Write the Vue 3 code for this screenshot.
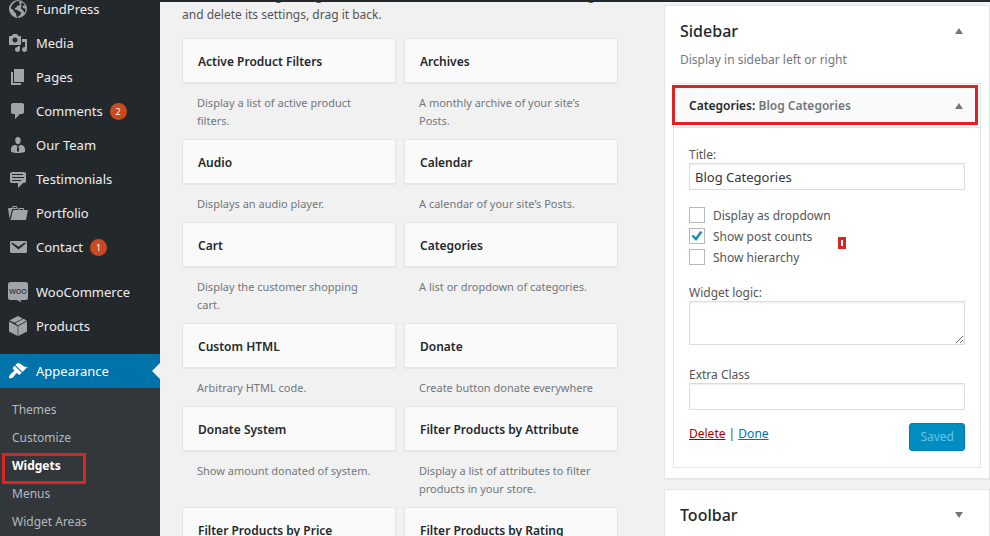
<script setup>
import { ref } from 'vue'

const icons = {
  globe: 'M10 1a9 9 0 1 0 0 18 9 9 0 0 0 0-18zM8.200 2.300l3.600-.2-.8 1.700 1.300 1.400-1.500 1.600-1.200-.3-1.300 1.900-1.500.7.300 1.500 2 .4 2.600 1.400 1.500 1.200-.8 2.300-2 1.400-.9 1.700-1.300-2.700-.2-2.100-1.700-1.300-.9-1.900-2.600-1.400.2-1.600 1.500-2.800zM14 3.300l2 1.600 1.200 2-1.600-.4-1.200 1.300.9 1.500 2.400.5-.3 2.300-1.200 1.800-.9-2.300-1.900-1.300-.6-2 .9-1.900-.7-1.400z',
  media: 'M13 11V4c0-.55-.45-1-1-1h-1.67L9 1H5L3.67 3H2c-.55 0-1 .45-1 1v7c0 .55.45 1 1 1h10c.55 0 1-.45 1-1zM7 4.5c1.38 0 2.5 1.12 2.5 2.5S8.38 9.5 7 9.5 4.5 8.38 4.5 7 5.62 4.5 7 4.5zM14 6h5v10.5c0 1.38-1.12 2.5-2.5 2.5S14 17.88 14 16.5s1.12-2.5 2.5-2.5c.17 0 .34.02.5.05V9h-3V6zm-4 8.05V13h2v3.5c0 1.38-1.12 2.5-2.5 2.5S7 17.88 7 16.5 8.12 14 9.5 14c.17 0 .34.02.5.05z',
  pages: 'M6 15V2h10v13H6zm-1 1h8v2H3V5h2v11z',
  comments: 'M5 2h9c1.1 0 2 .9 2 2v7c0 1.1-.9 2-2 2h-2l-5 5v-5H5c-1.1 0-2-.9-2-2V4c0-1.1.9-2 2-2z',
  team: 'M7.3 6l-.03-.19c-.04-.37-.05-.73-.03-1.08.02-.36.1-.71.25-1.04.14-.32.31-.61.52-.86s.49-.46.83-.6c.34-.15.72-.23 1.13-.23.69 0 1.26.2 1.71.59s.76.87.91 1.44.18 1.16.09 1.78l-.03.19c-.01.09-.05.25-.11.48-.05.24-.12.47-.2.69-.08.21-.19.45-.34.72-.14.27-.3.49-.47.69-.18.19-.4.34-.67.48-.27.13-.55.19-.86.19s-.59-.06-.87-.19c-.26-.13-.49-.29-.67-.5-.18-.2-.34-.42-.49-.66-.15-.25-.26-.49-.34-.73-.09-.25-.16-.47-.21-.67-.06-.21-.1-.37-.12-.5zm9.2 6.24c.41.7.5 1.41.5 2.14v2.49c0 .03-.12.08-.29.13-.18.04-.42.13-.97.27-.55.12-1.1.24-1.65.34s-1.19.19-1.95.27c-.75.08-1.46.12-2.13.12-.68 0-1.39-.04-2.14-.12-.75-.07-1.4-.17-1.98-.27-.58-.11-1.08-.23-1.56-.34-.49-.11-.8-.21-1.06-.29L3 16.87v-2.49c0-.75.07-1.46.46-2.15s.81-1.25 1.5-1.68C5.66 10.12 7.19 10 8 10l1.67 1.67L9 13v3l1.02 1.08L11 16v-3l-.68-1.33L11.97 10c.77 0 2.2.07 2.9.52.71.45 1.21 1.02 1.63 1.72z',
  testimonials: 'M4 3h12c.55 0 1.02.2 1.41.59S18 4.45 18 5v7c0 .55-.2 1.02-.59 1.41S16.55 14 16 14h-1l-5 5v-5H4c-.55 0-1.02-.2-1.41-.59S2 12.55 2 12V5c0-.55.2-1.02.59-1.41S3.45 3 4 3zm11 2H4v1h11V5zm1 3H4v1h12V8zm-3 3H4v1h9v-1z',
  portfolio: 'M4 5H.78c-.37 0-.74.32-.69.84l1.56 9.99S3.5 8.47 3.86 6.7c.11-.53.61-.7.98-.7H10s-.7-2.08-.77-2.31C9.11 3.25 8.89 3 8.45 3H5.14c-.36 0-.7.23-.8.64C4.25 4.04 4 5 4 5zm4.88 0h-4s.42-1 .87-1h2.13c.48 0 1 1 1 1zM2.67 16.25c-.31.47-.76.75-1.26.75h15.73c.54 0 .92-.31 1.03-.83.44-2.19 1.68-8.44 1.68-8.44.07-.5-.3-.73-.62-.73H16V5.53c0-.16-.26-.53-.66-.53h-3.76c-.52 0-.87.58-.87.58L10 7H5.59c-.32 0-.63.19-.69.5 0 0-1.59 6.7-1.72 7.33-.07.37-.22.99-.51 1.42zM15.38 7H11s.58-1 1.13-1h2.29c.71 0 .96 1 .96 1z',
  contact: 'M3.87 4h13.25C18.37 4 19 4.59 19 5.79v8.42c0 1.19-.63 1.79-1.88 1.79H3.87c-1.25 0-1.88-.6-1.88-1.79V5.79c0-1.2.63-1.79 1.88-1.79zm6.62 8.6l6.74-5.53c.24-.2.43-.66.13-1.07-.29-.41-.82-.42-1.17-.17l-5.7 3.86L4.8 5.83c-.35-.25-.88-.24-1.17.17-.3.41-.11.87.13 1.07z',
  woo: 'M2.5 0h15A2.5 2.5 0 0 1 20 2.5v13a2.5 2.5 0 0 1-2.5 2.5H12.6l.6 2.2L8.8 18H2.5A2.5 2.5 0 0 1 0 15.5v-13A2.5 2.5 0 0 1 2.5 0z',
  products: 'M10 0l4.8 2.400-8.400 4.400L1.400 4.600zM15.600 2.800L18.700 4.500 10 9.500 7.200 7.200zM1 5.400l8.700 4.800V20L1 15.400zM19 5.300v10.100L10.300 20v-9.800z',
  appearance: 'M14.48 11.06L7.41 3.99l1.5-1.5c.5-.56 2.3-.47 3.51.32 1.21.8 1.43 1.28 2.91 2.1 1.18.64 2.45 1.26 4.45.85zm-.71.71L6.7 4.7 4.93 6.47c-.39.39-.39 1.02 0 1.41l1.06 1.06c.39.39.39 1.03 0 1.42-.6.6-1.43 1.11-2.21 1.69-.35.26-.7.53-1.01.84C1.43 14.23.4 16.08 1.4 17.07c.99 1 2.84-.03 4.18-1.36.31-.31.58-.66.85-1.02.57-.78 1.08-1.61 1.69-2.21.39-.39 1.02-.39 1.41 0l1.06 1.06c.39.39 1.02.39 1.41 0z',
}

const menu = [
  { label: 'FundPress', icon: 'globe' },
  { label: 'Media', icon: 'media' },
  { label: 'Pages', icon: 'pages' },
  { label: 'Comments', icon: 'comments', count: 2 },
  { label: 'Our Team', icon: 'team' },
  { label: 'Testimonials', icon: 'testimonials' },
  { label: 'Portfolio', icon: 'portfolio' },
  { label: 'Contact', icon: 'contact', count: 1 },
  { label: 'WooCommerce', icon: 'woo', gap: true },
  { label: 'Products', icon: 'products' },
  { label: 'Appearance', icon: 'appearance', gap: true, current: true },
]
const submenu = ['Themes', 'Customize', 'Widgets', 'Menus', 'Widget Areas']

const widgets = [
  ['Active Product Filters', 'Display a list of active product filters.'],
  ['Archives', 'A monthly archive of your site’s Posts.'],
  ['Audio', 'Displays an audio player.'],
  ['Calendar', 'A calendar of your site’s Posts.'],
  ['Cart', 'Display the customer shopping cart.'],
  ['Categories', 'A list or dropdown of categories.'],
  ['Custom HTML', 'Arbitrary HTML code.'],
  ['Donate', 'Create button donate everywhere'],
  ['Donate System', 'Show amount donated of system.'],
  ['Filter Products by Attribute', 'Display a list of attributes to filter products in your store.'],
  ['Filter Products by Price', ''],
  ['Filter Products by Rating', ''],
]

const title = ref('Blog Categories')
const logic = ref('')
const extraClass = ref('')
const options = ref([
  { id: 'dropdown', label: 'Display as dropdown', on: false },
  { id: 'counts', label: 'Show post counts', on: true },
  { id: 'hierarchy', label: 'Show hierarchy', on: false },
])
</script>

<template>
  <div class="admin">
    <header class="adminbar"></header>
    <div class="body">
      <nav class="side">
        <a
          v-for="item in menu"
          :key="item.label"
          href="#"
          class="item"
          :class="{ gap: item.gap, current: item.current }"
        >
          <svg class="icon" viewBox="0 0 20 20" aria-hidden="true">
            <path :d="icons[item.icon]" fill-rule="evenodd" />
            <text v-if="item.icon === 'woo'" class="woo" x="10" y="12" text-anchor="middle">WOO</text>
          </svg>
          <span>{{ item.label }}</span>
          <span v-if="item.count" class="count">{{ item.count }}</span>
        </a>
        <div class="submenu">
          <a
            v-for="name in submenu"
            :key="name"
            href="#"
            class="subitem"
            :class="{ active: name === 'Widgets' }"
          >{{ name }}</a>
        </div>
      </nav>

      <main class="content">
        <section class="available">
          <p class="intro">To activate a widget drag it to a sidebar or click on it. To deactivate a widget and delete its settings, drag it back.</p>
          <div class="grid">
            <article v-for="[name, text] in widgets" :key="name">
              <h3 class="card">{{ name }}</h3>
              <p v-if="text" class="desc">{{ text }}</p>
            </article>
          </div>
        </section>

        <section class="areas">
          <div class="panel">
            <div class="panel-head">
              <h2>Sidebar</h2>
              <button type="button" class="toggle" aria-label="Collapse Sidebar"><i class="up"></i></button>
            </div>
            <p class="panel-desc">Display in sidebar left or right</p>
            <div class="widget">
              <div class="widget-head">
                <h3>Categories: <span>Blog Categories</span></h3>
                <button type="button" class="toggle" aria-label="Collapse Categories"><i class="up"></i></button>
              </div>
              <form class="form" @submit.prevent>
                <label class="label" for="w-title">Title:</label>
                <input id="w-title" v-model="title" class="text" type="text" />
                <div class="checks">
                  <label v-for="opt in options" :key="opt.id" class="check" :for="opt.id">
                    <input :id="opt.id" v-model="opt.on" type="checkbox" />
                    <span>{{ opt.label }}</span>
                  </label>
                  <span class="marker"></span>
                </div>
                <label class="label" for="w-logic">Widget logic:</label>
                <textarea id="w-logic" v-model="logic" class="text area"></textarea>
                <label class="label" for="w-class">Extra Class</label>
                <input id="w-class" v-model="extraClass" class="text" type="text" />
                <div class="actions">
                  <div class="links"><a href="#" class="delete">Delete</a> | <a href="#" class="done">Done</a></div>
                  <button type="submit" class="saved" disabled>Saved</button>
                </div>
              </form>
            </div>
          </div>
          <div class="panel">
            <div class="panel-head">
              <h2>Toolbar</h2>
              <button type="button" class="toggle" aria-label="Expand Toolbar"><i class="down"></i></button>
            </div>
          </div>
        </section>
      </main>
    </div>
  </div>
</template>

<style>
body {
  background: #f1f1f1;
}
</style>

<style scoped>
*,
*::after {
  box-sizing: border-box;
}
h2, h3, p {
  margin: 0;
}
.admin {
  display: flex;
  flex-direction: column;
  height: 100vh;
  overflow: hidden;
  background: #f1f1f1;
  color: #444;
  font-family: "Noto Sans", "Open Sans", sans-serif;
  font-size: 12px;
  line-height: 18px;
}
.adminbar {
  flex: none;
  height: 2px;
  background: #23282d;
}
.body {
  display: flex;
  flex: 1;
  min-height: 0;
}
.side {
  flex: none;
  width: 160px;
  margin-top: -10px;
  background: #23282d;
}
.item {
  position: relative;
  display: flex;
  align-items: center;
  height: 34px;
  padding-left: 8px;
  color: #eee;
  font-size: 13px;
  text-decoration: none;
}
.item.gap {
  margin-top: 11px;
}
.icon {
  width: 20px;
  height: 20px;
  margin-right: 8px;
  fill: #a0a5aa;
  overflow: visible;
}
.woo {
  fill: #32373c;
  font-family: "Open Sans", sans-serif;
  font-size: 7px;
  font-weight: 600;
}
.count {
  width: 17px;
  height: 17px;
  margin-left: 7px;
  border-radius: 50%;
  background: #ca4a1f;
  color: #fff;
  font-size: 9px;
  line-height: 17px;
  text-align: center;
}
.item.current {
  background: #0073aa;
  color: #fff;
}
.item.current .icon {
  fill: #fff;
}
.item.current::after {
  content: "";
  position: absolute;
  right: 0;
  top: 9px;
  border: 8px solid transparent;
  border-left-width: 0;
  border-right-color: #f1f1f1;
}
.submenu {
  padding: 8px 0;
  background: #32373c;
}
.subitem {
  position: relative;
  display: block;
  padding: 5px 12px;
  color: #b4b9be;
  font-size: 12px;
  text-decoration: none;
}
.subitem.active {
  color: #fff;
  font-weight: 700;
}
.subitem.active::after {
  content: "";
  position: absolute;
  left: 2px;
  top: 1px;
  width: 84px;
  height: 31px;
  border: 3px solid #dd2425;
}
.content {
  display: grid;
  flex: 1;
  grid-template-columns: 218fr 163fr;
  gap: 46px;
  align-items: start;
  padding-left: 22px;
  overflow: hidden;
}
.intro {
  margin-top: -16px;
  color: #555;
  font-size: 12px;
  line-height: 19px;
}
.grid {
  display: grid;
  grid-template-columns: 1fr 1fr;
  column-gap: 8px;
  margin-top: 14px;
}
.card {
  padding: 14px 15px 11px;
  border: 1px solid #e5e5e5;
  background: #fafafa;
  box-shadow: 0 1px 1px rgba(0, 0, 0, 0.04);
  color: #23282d;
  font-size: 12px;
  font-weight: 600;
}
.desc {
  padding: 11px 15px 9px;
  color: #72777c;
  font-size: 11px;
}
.areas {
  display: flex;
  flex-direction: column;
  gap: 10px;
  padding-top: 3px;
}
.panel {
  padding: 0 8px 10px;
  border: 1px solid #e5e5e5;
  background: #fff;
  box-shadow: 0 1px 1px rgba(0, 0, 0, 0.04);
}
.panel-head {
  display: flex;
  align-items: center;
  justify-content: space-between;
  padding: 13px 12px 8px 7px;
}
.panel-head h2 {
  color: #23282d;
  font-size: 16px;
  font-weight: 500;
  line-height: 24px;
}
.toggle {
  display: grid;
  place-items: center;
  width: 20px;
  height: 20px;
  padding: 0;
  border: 0;
  background: none;
}
.up,
.down {
  border: 4px solid transparent;
}
.up {
  border-top-width: 0;
  border-bottom: 6px solid #72777c;
}
.down {
  border-bottom-width: 0;
  border-top: 6px solid #72777c;
}
.panel-desc {
  padding: 0 7px 14px;
  color: #72777c;
}
.widget {
  border: 1px solid #e5e5e5;
}
.widget-head {
  position: relative;
  display: flex;
  align-items: center;
  justify-content: space-between;
  padding: 12px 11px 11px 15px;
  border-bottom: 1px solid #e5e5e5;
  background: #fafafa;
}
.widget-head::after {
  content: "";
  position: absolute;
  inset: 1px 2px 2px -2px;
  border: 3px solid #dd2425;
}
.widget-head h3 {
  color: #23282d;
  font-size: 12px;
  font-weight: 600;
}
.widget-head span {
  color: #72777c;
}
.form {
  display: flex;
  flex-direction: column;
  padding: 17px 15px 16px;
}
.label {
  padding-top: 1px;
  color: #555;
  line-height: 17px;
}
.text {
  width: 100%;
  height: 27px;
  margin: 0;
  padding: 0 5px;
  border: 1px solid #ddd;
  border-radius: 0;
  background: #fff;
  box-shadow: inset 0 1px 2px rgba(0, 0, 0, 0.07);
  color: #32373c;
  font: inherit;
  font-size: 13px;
}
.area {
  height: 44px;
  margin-bottom: 20px;
  resize: vertical;
}
.checks {
  position: relative;
  display: grid;
  gap: 5px;
  padding: 17px 0 18px;
}
.check {
  display: flex;
  align-items: center;
  gap: 8px;
  height: 16px;
  color: #555;
}
.check span {
  padding-top: 2px;
}
.check input {
  appearance: none;
  display: grid;
  place-items: center;
  width: 16px;
  height: 16px;
  margin: 0;
  border: 1px solid #b4b9be;
  background: #fff;
}
.check input:checked::before {
  content: "";
  width: 11px;
  height: 10px;
  background: #1e8cbe;
  clip-path: polygon(0 52%, 18% 38%, 38% 62%, 80% 0, 100% 12%, 42% 100%);
}
.marker {
  position: absolute;
  left: 149px;
  top: 47px;
  width: 8px;
  height: 12px;
  border: 3px solid #dd2425;
  background: #fff;
}
.actions {
  display: flex;
  align-items: flex-start;
  justify-content: space-between;
  padding-top: 13px;
}
.links {
  padding-top: 2px;
}
.delete {
  color: #a00;
}
.done {
  color: #0073aa;
}
.saved {
  height: 28px;
  padding: 0 10px;
  border: 1px solid #007cb2;
  border-radius: 3px;
  background: #008ec2;
  color: #66c6e4;
  font: inherit;
}
</style>
